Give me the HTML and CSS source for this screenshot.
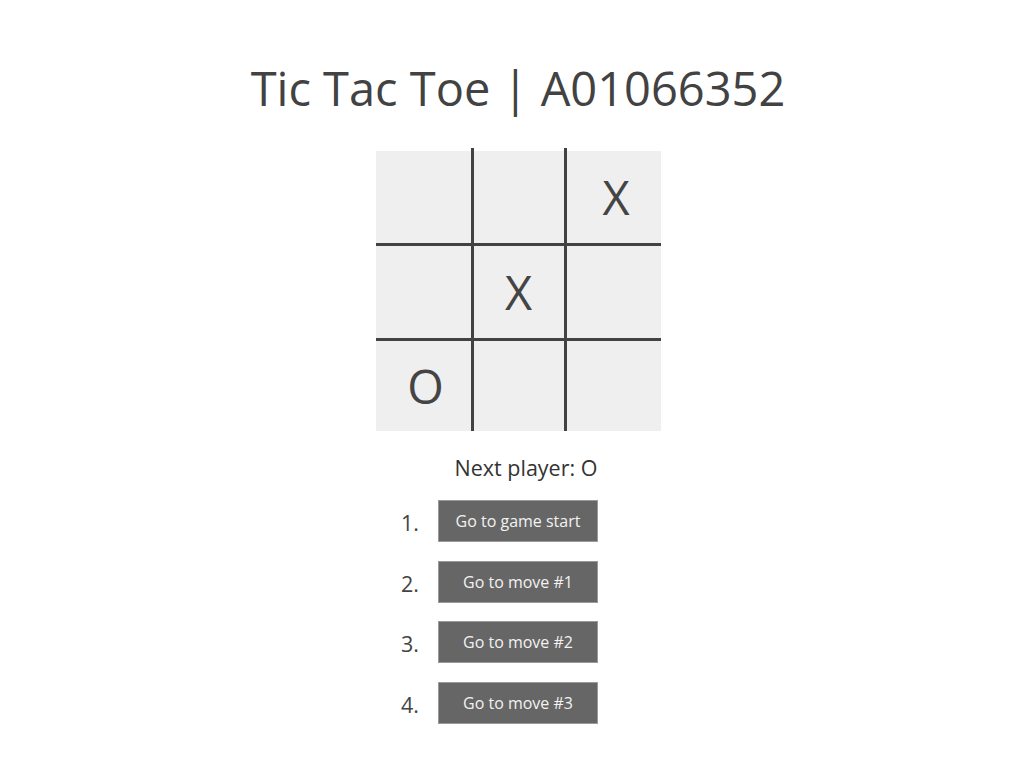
FILE: index.html
```html
<!DOCTYPE html>
<html lang="en">
<head>
<meta charset="utf-8">
<title>Tic Tac Toe</title>
<link rel="stylesheet" href="styles.css">
</head>
<body>
<main class="game">
  <h1 class="title">Tic Tac Toe | A01066352</h1>
  <div class="board-wrap">
    <div class="board-cap"></div>
    <div class="board">
      <div class="sq side"></div>
      <div class="sq col-mid"></div>
      <div class="sq side">X</div>
      <div class="sq side row-mid"></div>
      <div class="sq col-mid row-mid">X</div>
      <div class="sq side row-mid"></div>
      <div class="sq side">O</div>
      <div class="sq col-mid"></div>
      <div class="sq side"></div>
    </div>
  </div>
  <div class="status">Next player: O</div>
  <ol class="moves">
    <li class="move"><span class="num">1.</span><button class="btn">Go to game start</button></li>
    <li class="move"><span class="num">2.</span><button class="btn">Go to move #1</button></li>
    <li class="move"><span class="num">3.</span><button class="btn">Go to move #2</button></li>
    <li class="move"><span class="num">4.</span><button class="btn">Go to move #3</button></li>
  </ol>
</main>
</body>
</html>
```
FILE: styles.css
```css
html, body {
  margin: 0;
  padding: 0;
  background: #fff;
}
body {
  font-family: "Open Sans", "Liberation Sans", sans-serif;
  color: #444;
}
.game {
  display: flex;
  flex-direction: column;
  align-items: center;
  padding: 56px 0 0 12px;
}
.title {
  margin: 0;
  font-size: 47px;
  line-height: 64px;
  font-weight: 400;
  color: #424242;
}
.board-wrap {
  margin-top: 28px;
  width: 285px;
}
.board-cap {
  height: 3px;
  background: linear-gradient(to right,
    transparent 0 95px, #424242 95px 98px,
    transparent 98px 188px, #424242 188px 191px,
    transparent 191px);
}
.board {
  display: grid;
  grid-template-columns: 95px 96px 94px;
  grid-template-rows: 92px 98px 90px;
}
.sq {
  box-sizing: border-box;
  background: #efefef;
  display: flex;
  align-items: center;
  justify-content: center;
  font-size: 47px;
  line-height: 1;
  color: #444;
  border: 0 solid #424242;
}
.side {
  padding-left: 5px;
}
.col-mid {
  border-left-width: 3px;
  border-right-width: 3px;
}
.row-mid {
  border-top-width: 3px;
  border-bottom-width: 3px;
}
.status {
  margin-top: 24.7px;
  padding-left: 16px;
  font-size: 21.5px;
  line-height: 24px;
  color: #333;
}
.moves {
  list-style: none;
  margin: 20.3px 0 0;
  padding: 0;
  width: 160px;
  display: flex;
  flex-direction: column;
  gap: 18.67px;
}
.move {
  display: flex;
  align-items: flex-start;
  height: 42px;
}
.num {
  flex: none;
  width: 40px;
  margin-left: -59px;
  margin-right: 19px;
  text-align: right;
  font-size: 21.5px;
  line-height: 42px;
  padding-top: 2px;
  color: #444;
}
.btn {
  flex: none;
  box-sizing: border-box;
  width: 160px;
  height: 42px;
  padding: 0 10px;
  background: #666;
  border: 1px solid #9a9a9a;
  color: #f2f2f2;
  font-family: "Open Sans", "Liberation Sans", sans-serif;
  font-size: 16px;
  line-height: 22px;
  text-align: center;
}
```
